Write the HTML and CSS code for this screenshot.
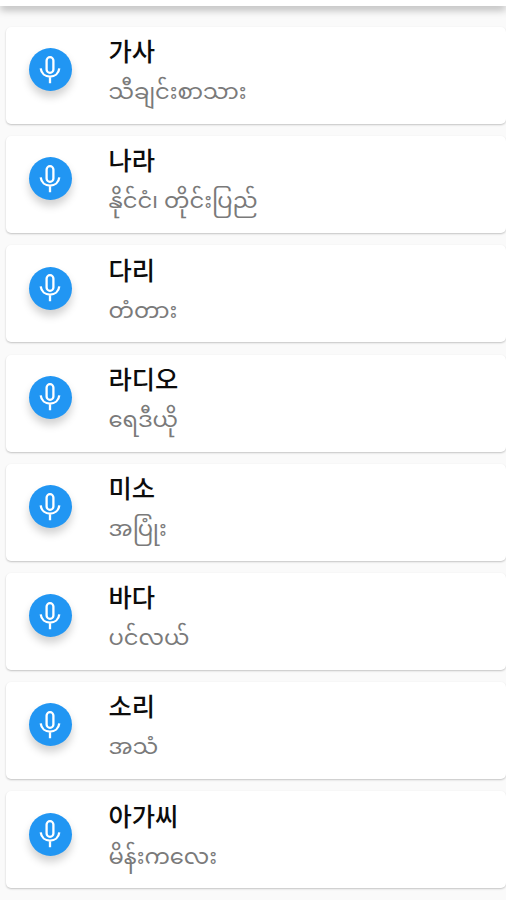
FILE: index.html
```
<!DOCTYPE html>
<html lang="ko">
<head>
  <meta charset="UTF-8" />
  <meta name="viewport" content="width=device-width, initial-scale=1.0" />
  <title>단어장</title>
  <link rel="stylesheet" href="styles.css">
</head>
<body>
  <svg class="symbols">
    <symbol id="mic" viewBox="0 0 24 30">
      <rect x="8.6" y="2.2" width="6.8" height="15.6" rx="3.4" />
      <path d="M2.7 13.4c0.6 5.2 4.6 8.2 9.3 8.2s8.7-3 9.3-8.2M12 21.6v6.6" />
    </symbol>
  </svg>

  <div class="app-bar"></div>

  <div class="word-list">
    <div class="card">
      <button class="mic-button"><svg class="mic"><use href="#mic" /></svg></button>
      <div class="word">
        <div class="korean">가사</div>
        <div class="burmese" lang="my">သီချင်းစာသား</div>
      </div>
    </div>
    <div class="card">
      <button class="mic-button"><svg class="mic"><use href="#mic" /></svg></button>
      <div class="word">
        <div class="korean">나라</div>
        <div class="burmese" lang="my">နိုင်ငံ၊ တိုင်းပြည်</div>
      </div>
    </div>
    <div class="card">
      <button class="mic-button"><svg class="mic"><use href="#mic" /></svg></button>
      <div class="word">
        <div class="korean">다리</div>
        <div class="burmese" lang="my">တံတား</div>
      </div>
    </div>
    <div class="card">
      <button class="mic-button"><svg class="mic"><use href="#mic" /></svg></button>
      <div class="word">
        <div class="korean">라디오</div>
        <div class="burmese" lang="my">ရေဒီယို</div>
      </div>
    </div>
    <div class="card">
      <button class="mic-button"><svg class="mic"><use href="#mic" /></svg></button>
      <div class="word">
        <div class="korean">미소</div>
        <div class="burmese" lang="my">အပြုံး</div>
      </div>
    </div>
    <div class="card">
      <button class="mic-button"><svg class="mic"><use href="#mic" /></svg></button>
      <div class="word">
        <div class="korean">바다</div>
        <div class="burmese" lang="my">ပင်လယ်</div>
      </div>
    </div>
    <div class="card">
      <button class="mic-button"><svg class="mic"><use href="#mic" /></svg></button>
      <div class="word">
        <div class="korean">소리</div>
        <div class="burmese" lang="my">အသံ</div>
      </div>
    </div>
    <div class="card">
      <button class="mic-button"><svg class="mic"><use href="#mic" /></svg></button>
      <div class="word">
        <div class="korean">아가씨</div>
        <div class="burmese" lang="my">မိန်းကလေး</div>
      </div>
    </div>
  </div>
</body>
</html>
```

FILE: styles.css
```
* {
  box-sizing: border-box;
}
body {
  margin: 0;
  height: 900px;
  overflow: hidden;
  background-color: #fafafa;
  font-family: Roboto, "Noto Sans CJK KR", "Noto Sans Myanmar", sans-serif;
}
.symbols {
  display: none;
}
.app-bar {
  height: 6px;
  background-color: #fff;
  box-shadow: 0 3px 8px rgba(0, 0, 0, 0.36);
}
.word-list {
  display: flex;
  flex-direction: column;
  gap: 12.2px;
  padding: 21px 0 0 6px;
}
.card {
  display: flex;
  align-items: flex-start;
  height: 97px;
  padding-left: 22.5px;
  background-color: #fff;
  border-radius: 5px;
  box-shadow: 0 1px 2px rgba(0, 0, 0, 0.22);
}
.mic-button {
  display: flex;
  align-items: center;
  justify-content: center;
  width: 43px;
  height: 43px;
  margin: 21.3px 37px 0 0;
  padding: 0;
  border: 0;
  border-radius: 50%;
  background-color: #2196f3;
  box-shadow: 0 6px 9px rgba(0, 0, 0, 0.18);
}
.mic {
  width: 24px;
  height: 30px;
  fill: none;
  stroke: #fff;
  stroke-width: 2.3;
}
.word {
  padding-top: 6.3px;
}
.korean {
  font-family: "Noto Sans CJK KR", sans-serif;
  font-size: 25.3px;
  font-weight: 500;
  line-height: 34px;
  color: #0c0c0c;
}
.burmese {
  margin-top: 5px;
  font-family: "Noto Sans Myanmar", "Noto Sans", sans-serif;
  font-size: 22.6px;
  line-height: 44px;
  color: #7a7a7a;
  white-space: nowrap;
}
```
